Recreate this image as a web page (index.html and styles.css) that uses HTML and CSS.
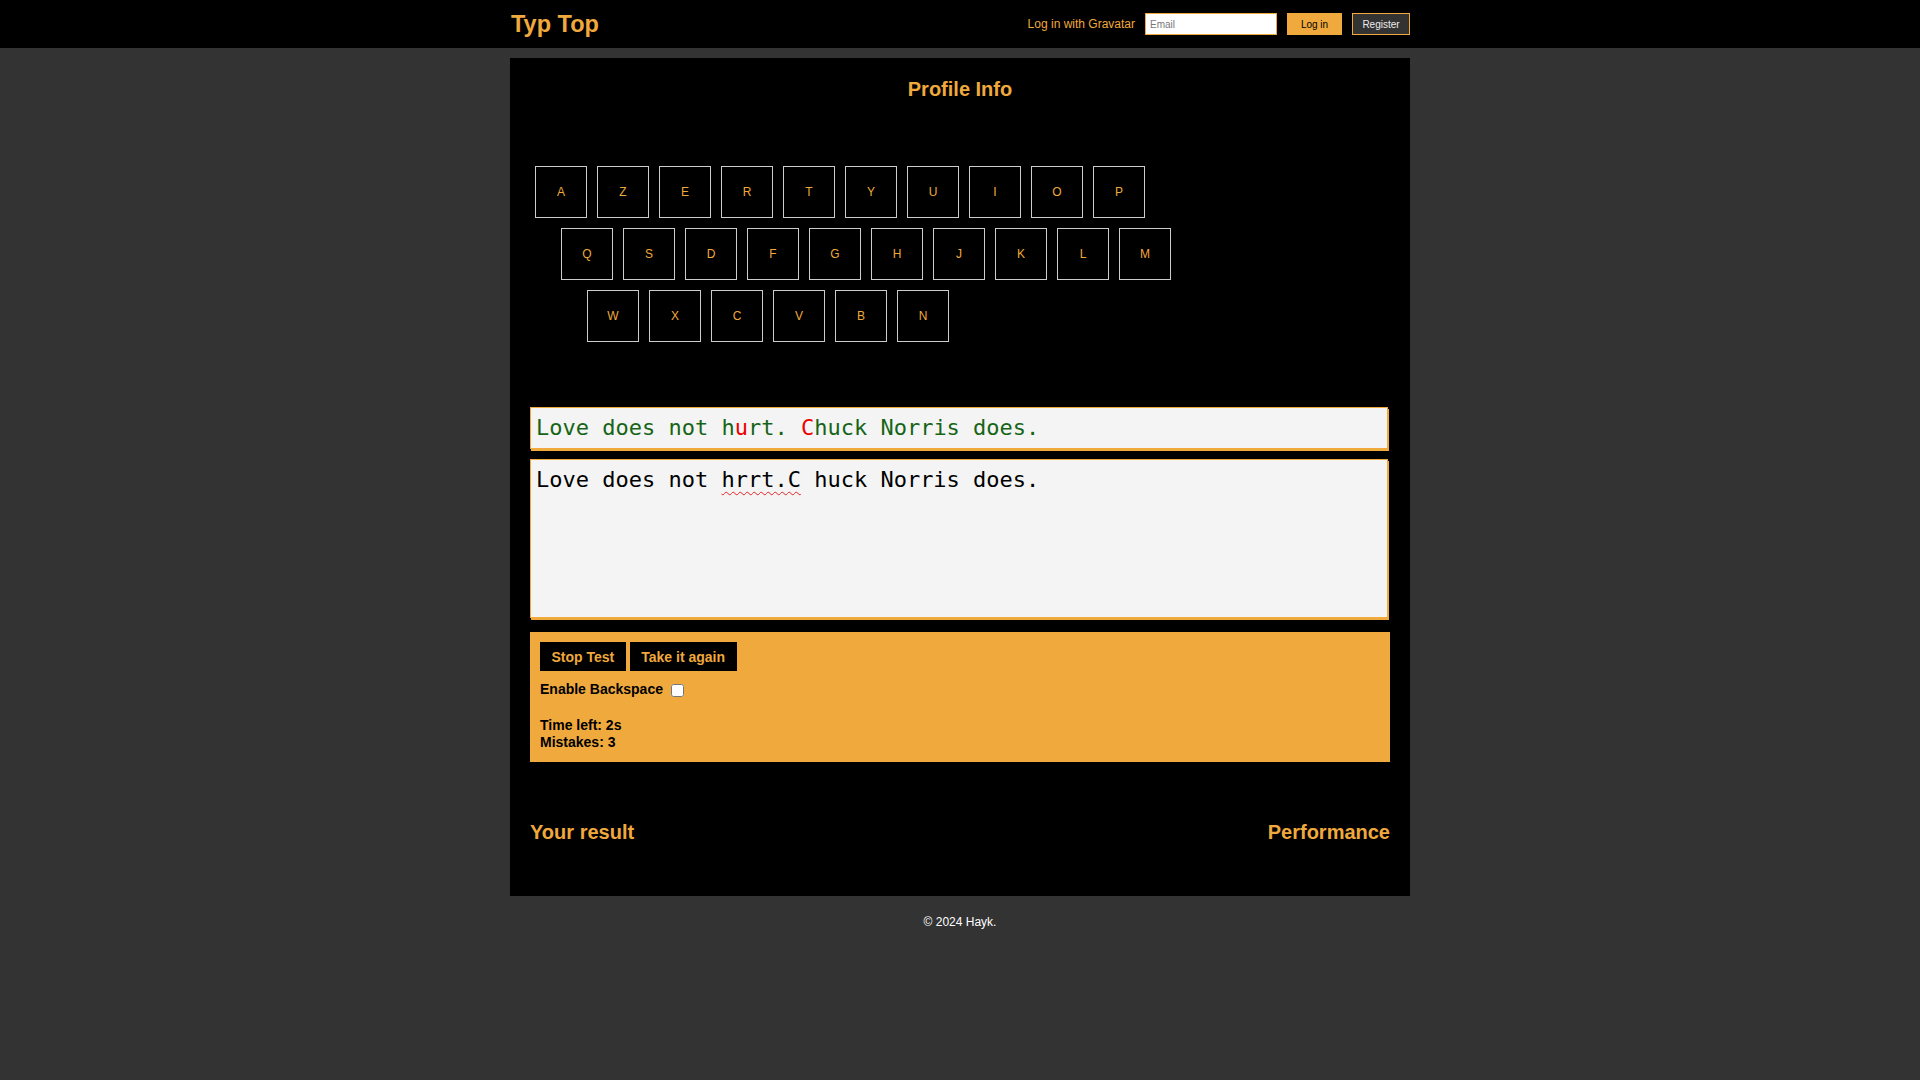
FILE: index.html
```html
<!DOCTYPE html>
<html lang="en">
<head>
<meta charset="utf-8">
<title>Typ Top</title>
<link rel="stylesheet" href="styles.css">
</head>
<body>
<header class="topbar">
  <div class="topbar-inner">
    <div class="brand">Typ Top</div>
    <div class="login">
      <span class="login-label">Log in with Gravatar</span>
      <input class="email" type="text" placeholder="Email">
      <button class="btn-login">Log in</button>
      <button class="btn-register">Register</button>
    </div>
  </div>
</header>

<main class="page">
  <h2 class="title">Profile Info</h2>

  <div class="keyboard">
    <div class="krow">
      <div class="key">A</div><div class="key">Z</div><div class="key">E</div><div class="key">R</div><div class="key">T</div><div class="key">Y</div><div class="key">U</div><div class="key">I</div><div class="key">O</div><div class="key">P</div>
    </div>
    <div class="krow krow-2">
      <div class="key">Q</div><div class="key">S</div><div class="key">D</div><div class="key">F</div><div class="key">G</div><div class="key">H</div><div class="key">J</div><div class="key">K</div><div class="key">L</div><div class="key">M</div>
    </div>
    <div class="krow krow-3">
      <div class="key">W</div><div class="key">X</div><div class="key">C</div><div class="key">V</div><div class="key">B</div><div class="key">N</div>
    </div>
  </div>

  <div class="target box"><span class="ok">Love does not h</span><span class="bad">u</span><span class="ok">rt. </span><span class="bad">C</span><span class="ok">huck Norris does.</span></div>

  <div class="typed box">Love does not <span class="spell">hrrt.C</span> huck Norris does.</div>

  <div class="panel">
    <div class="panel-buttons">
      <button class="btn-dark">Stop Test</button>
      <button class="btn-dark">Take it again</button>
    </div>
    <label class="backspace">Enable Backspace <input type="checkbox" class="check"></label>
    <div class="stats">
      <div>Time left: 2s</div>
      <div>Mistakes: 3</div>
    </div>
  </div>

  <div class="results">
    <h2 class="sub">Your result</h2>
    <h2 class="sub">Performance</h2>
  </div>
</main>

<footer class="footer">© 2024 Hayk.</footer>
</body>
</html>
```

FILE: styles.css
```css
* { box-sizing: border-box; }

body {
  margin: 0;
  background: #333333;
  font-family: "Liberation Sans", Arial, sans-serif;
  color: #f0a93c;
}

.topbar {
  background: #000;
  height: 48px;
}

.topbar-inner {
  width: 900px;
  height: 48px;
  margin: 0 auto;
  display: flex;
  align-items: center;
  justify-content: space-between;
}

.brand {
  font-size: 23.5px;
  font-weight: bold;
  color: #f0a93c;
  padding-left: 1px;
}

.login {
  display: flex;
  align-items: center;
  gap: 10px;
}

.login-label {
  font-size: 12px;
  color: #f0a93c;
}

.email {
  width: 132px;
  height: 22px;
  border: 1px solid #f0a93c;
  background: #fff;
  padding: 0 4px;
  font-family: "Liberation Sans", Arial, sans-serif;
  font-size: 10px;
  outline: none;
}

.email::placeholder { color: #777; }

.btn-login,
.btn-register {
  height: 22px;
  font-family: "Liberation Sans", Arial, sans-serif;
  font-size: 10px;
  padding: 0;
  cursor: pointer;
}

.btn-login {
  width: 55px;
  background: #f0a93c;
  color: #000;
  border: none;
}

.btn-register {
  width: 58px;
  background: #333;
  color: #ececec;
  border: 1px solid #f0a93c;
}

.page {
  width: 900px;
  margin: 10px auto 0;
  background: #000;
  padding: 19.5px 20px 52px;
}

.title {
  margin: 0;
  text-align: center;
  font-size: 20px;
  line-height: 23px;
  font-weight: bold;
  color: #f0a93c;
}

.keyboard {
  margin-top: 60.5px;
}

.krow {
  display: flex;
}

.krow-2 { padding-left: 26px; }
.krow-3 { padding-left: 52px; }

.key {
  width: 52px;
  height: 52px;
  margin: 5px;
  border: 1px solid #cccccc;
  display: flex;
  align-items: center;
  justify-content: center;
  font-size: 12px;
  color: #f0a93c;
}

.box {
  background: #f4f4f4;
  border: 1px solid #f0a93c;
  box-shadow: 1px 2px 0 #f0a93c;
  font-family: "DejaVu Sans Mono", "Liberation Mono", monospace;
  font-size: 22px;
  line-height: 25px;
  padding: 7px 5px;
  margin-right: 2px;
}

.target {
  margin-top: 60px;
  height: 42px;
  white-space: pre;
}

.ok { color: #166416; }
.bad { color: #ee0000; }

.typed {
  margin-top: 10px;
  height: 159px;
  color: #000;
  white-space: pre;
}

.spell {
  text-decoration: underline wavy #e52222;
  text-decoration-thickness: 1px;
  text-underline-offset: 4px;
  text-decoration-skip-ink: none;
}

.panel {
  margin-top: 14px;
  background: #f0a93c;
  padding: 10px 10px 11px;
  color: #000;
  font-size: 14px;
  font-weight: bold;
  height: 130px;
}

.panel-buttons {
  display: flex;
  gap: 4px;
}

.btn-dark {
  background: #000;
  color: #f0a93c;
  border: none;
  font-family: "Liberation Sans", Arial, sans-serif;
  font-size: 14px;
  font-weight: bold;
  height: 29px;
  padding: 0 11.5px;
  cursor: pointer;
}

.backspace {
  display: flex;
  align-items: center;
  margin-top: 10px;
  height: 17px;
  line-height: 17px;
}

.check {
  width: 13px;
  height: 13px;
  margin: 2px 0 0 8px;
}

.stats {
  margin-top: 19px;
  line-height: 17px;
}

.results {
  margin-top: 59px;
  display: flex;
  justify-content: space-between;
}

.sub {
  margin: 0;
  font-size: 20px;
  line-height: 23px;
  font-weight: bold;
  color: #f0a93c;
}

.footer {
  text-align: center;
  color: #ffffff;
  font-size: 12px;
  line-height: 14px;
  margin-top: 18.5px;
}
```
